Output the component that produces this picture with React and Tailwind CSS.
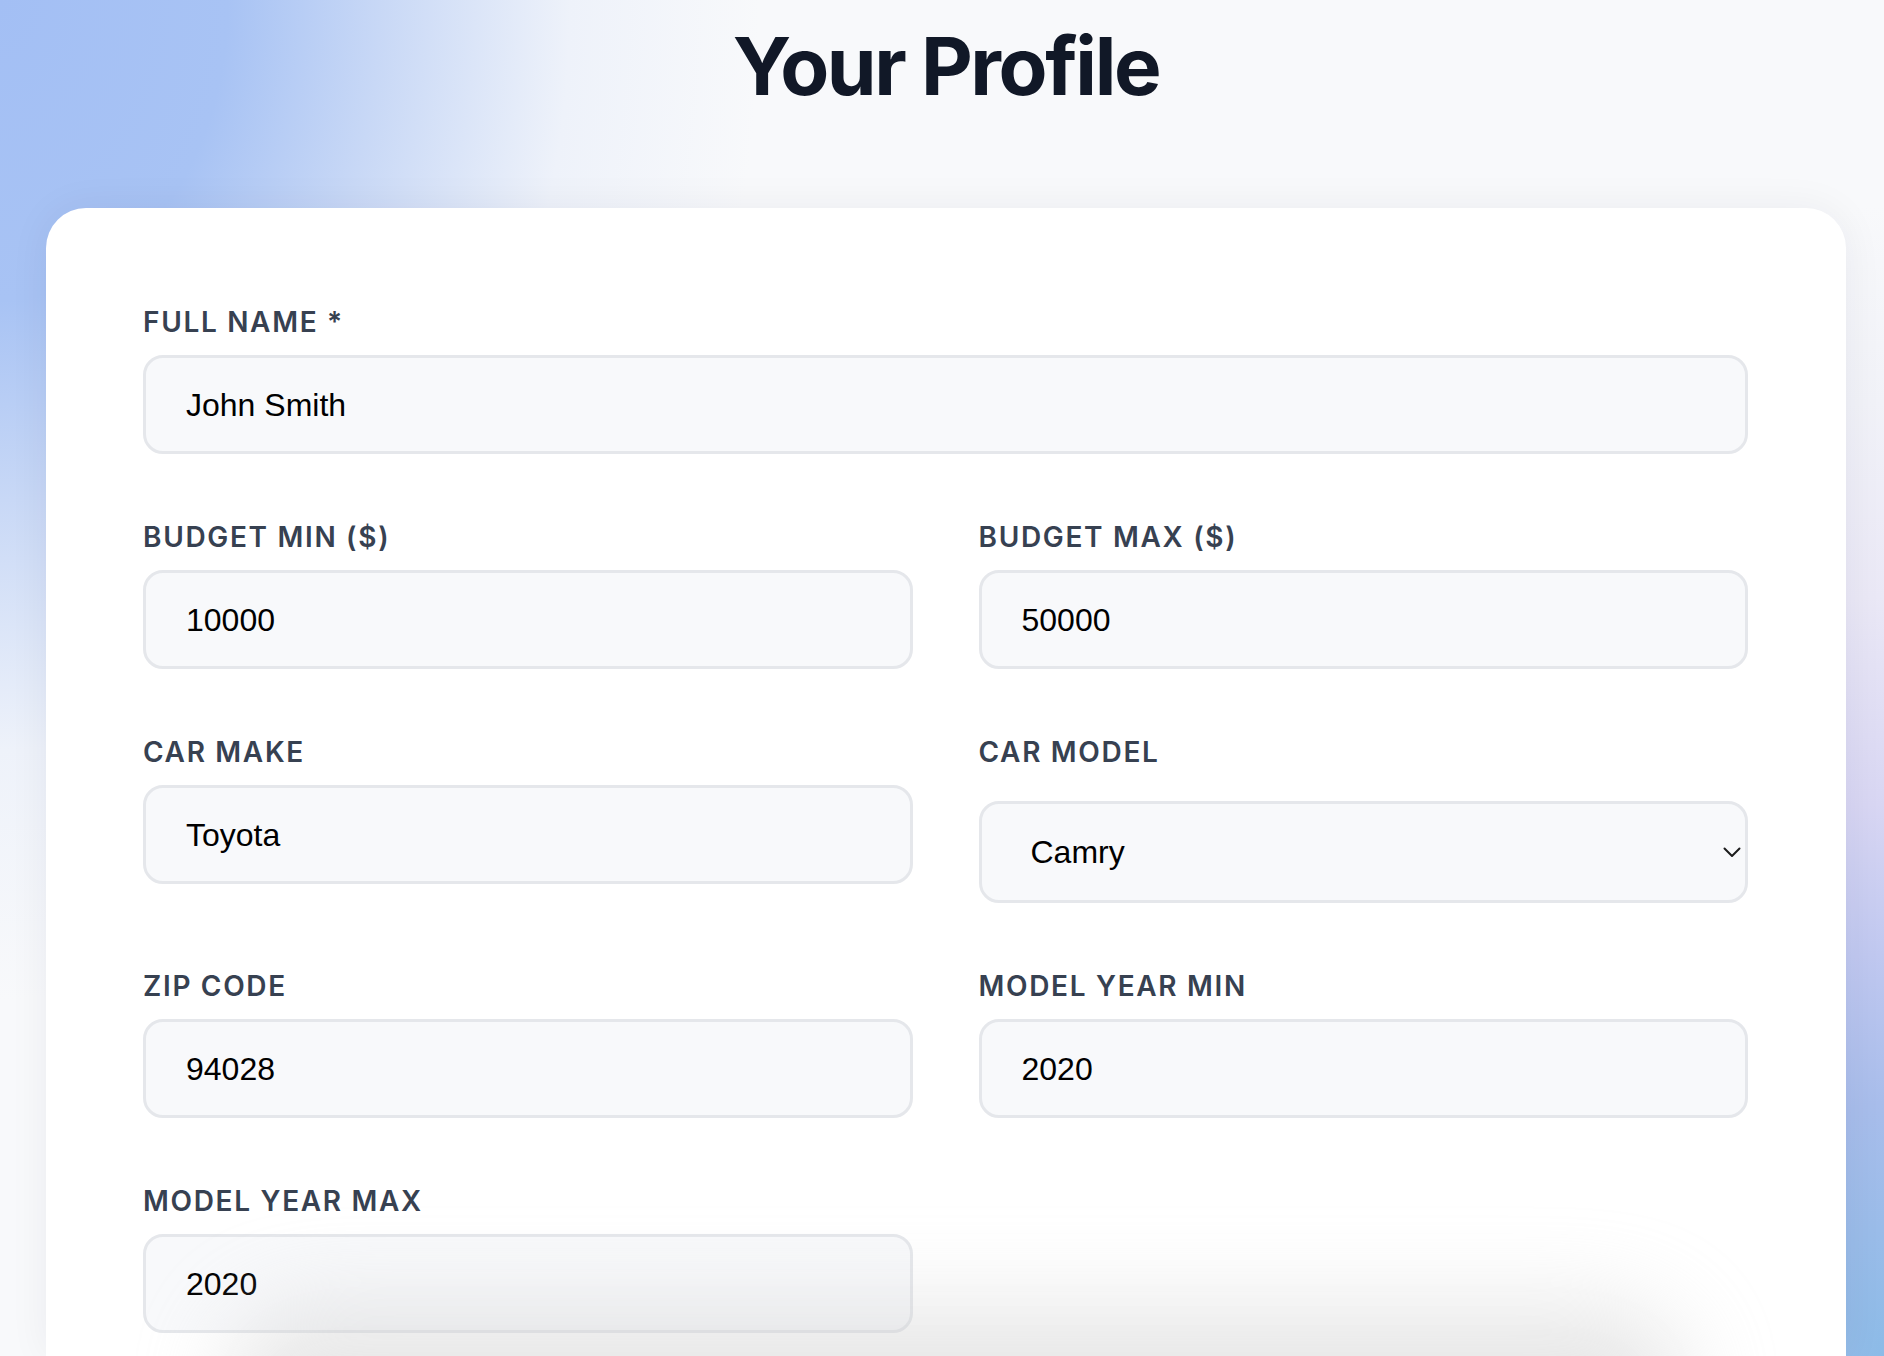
import React from "react";

function Label({ children }) {
  return (
    <div className="h-[40px] text-[28px] leading-[40px] font-semibold uppercase tracking-[0.06em] text-[#374151] font-['Inter',sans-serif]">
      {children}
    </div>
  );
}

function Field({ label, value, span }) {
  return (
    <div className={span ? "col-span-2 flex flex-col" : "flex flex-col"}>
      <Label>{label}</Label>
      <div className="mt-[13px] flex h-[99px] items-center rounded-[20px] border-[3px] border-[#e5e7eb] bg-[#f8f9fb] pl-[40px] text-[32px] text-black font-['Liberation_Sans',Arial,sans-serif]">
        {value}
      </div>
    </div>
  );
}

function SelectField({ label, value }) {
  return (
    <div className="flex flex-col">
      <Label>{label}</Label>
      <div className="mt-[29px] flex h-[102px] items-center justify-between rounded-[20px] border-[3px] border-[#e5e7eb] bg-[#f8f9fb] pl-[49px] pr-[4px] text-[32px] text-black font-['Liberation_Sans',Arial,sans-serif]">
        <span>{value}</span>
        <svg width="18" height="11" viewBox="0 0 18 11" fill="none">
          <polyline points="1.5,1.5 9,9 16.5,1.5" stroke="#1c1c1c" strokeWidth="2" strokeLinecap="round" strokeLinejoin="round" />
        </svg>
      </div>
    </div>
  );
}

export default function App() {
  return (
    <div className="relative h-[1356px] overflow-hidden bg-[#f8f9fb] font-['Inter',sans-serif]">
      <div className="pointer-events-none absolute inset-0 bg-[radial-gradient(ellipse_760px_1000px_at_0%_0%,#a3bff4_0%,#a8c3f4_30%,#c8d8f6_50%,#eef2fa_75%,rgba(248,249,251,0)_100%),radial-gradient(ellipse_700px_1150px_at_100%_100%,#8cbbe7_0%,#a8bdeb_22%,#c0c8f0_35%,#d8d6f3_48%,#eae8f6_66%,#f1f2f8_83%,rgba(248,249,251,0)_100%)]" />
      <div className="relative flex h-full flex-col pl-[46px] pr-[38px]">
        <h1 className="mt-[26px] h-[80px] text-center text-[80px] leading-[80px] font-bold tracking-[-0.03em] text-[#111827]">
          Your Profile
        </h1>
        <div className="relative mt-[102px] flex-1 overflow-hidden rounded-t-[40px] bg-white pl-[97px] pr-[98px] pt-[94px] shadow-[0_0_40px_rgba(30,41,59,0.06)]">
          <div className="grid grid-cols-2 gap-x-[66px] gap-y-[63px]">
            <Field label="Full Name *" value="John Smith" span />
            <Field label="Budget Min ($)" value="10000" />
            <Field label="Budget Max ($)" value="50000" />
            <Field label="Car Make" value="Toyota" />
            <SelectField label="Car Model" value="Camry" />
            <Field label="Zip Code" value="94028" />
            <Field label="Model Year Min" value="2020" />
            <Field label="Model Year Max" value="2020" />
          </div>
          <div className="pointer-events-none absolute bottom-[-120px] left-[180px] right-[160px] z-10 h-[170px] rounded-full bg-[#cfcfcf] opacity-50 blur-[45px]" />
        </div>
      </div>
    </div>
  );
}
